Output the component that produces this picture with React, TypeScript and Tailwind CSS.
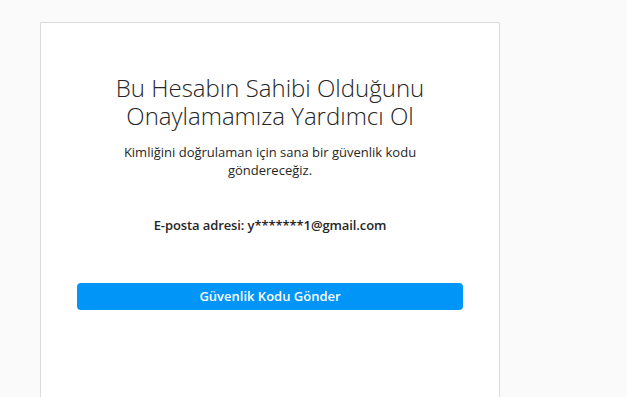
export default function App() {
  return (
    <div className="h-[397px] overflow-hidden bg-[#fafafa] pt-[22px] pl-[40px]" style={{ fontFamily: '"Open Sans", "Noto Sans", sans-serif' }}>
      <div className="w-[460px] h-[400px] bg-white border border-[#dbdbdb] rounded-[1px] px-[36px] pt-[51px] flex flex-col items-center text-center">
        <h1 className="text-[24px] leading-[28px] font-light text-[#262626] w-[360px]">
          Bu Hesabın Sahibi Olduğunu Onaylamamıza Yardımcı Ol
        </h1>
        <p className="mt-[13px] text-[13px] leading-[18px] text-[#262626] w-[310px]">
          Kimliğini doğrulaman için sana bir güvenlik kodu göndereceğiz.
        </p>
        <p className="mt-[37px] text-[13px] leading-[18px] font-semibold text-[#262626] tracking-[-0.1px]">
          E-posta adresi: y*******1@gmail.com
        </p>
        <button className="mt-[49px] w-full h-[27px] rounded-[4px] bg-[#0095f6] text-white text-[13px] font-semibold">
          Güvenlik Kodu Gönder
        </button>
      </div>
    </div>
  );
}
